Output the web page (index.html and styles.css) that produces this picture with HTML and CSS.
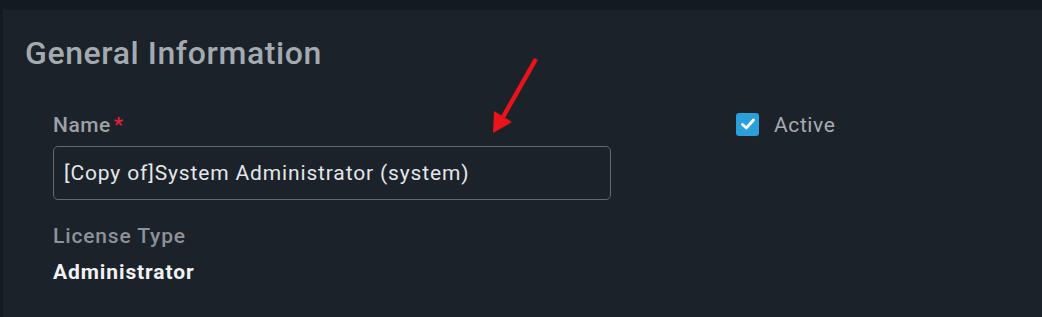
FILE: index.html
```html
<!DOCTYPE html>
<html>
<head>
<meta charset="utf-8">
<link rel="stylesheet" href="styles.css">
</head>
<body>
<div class="topband"></div>
<div class="panel">
  <h2 class="title">General Information</h2>
  <div class="row">
    <div class="col-left">
      <div class="field">
        <label class="label">Name<span class="req">*</span></label>
        <div class="input">[Copy of]System Administrator (system)</div>
      </div>
      <div class="field2">
        <div class="label2">License Type</div>
        <div class="value">Administrator</div>
      </div>
    </div>
    <div class="col-right">
      <div class="check-row">
        <span class="checkbox">
          <svg width="16" height="16" viewBox="0 0 16 16"><path d="M2.5 8.5 L6.3 12 L13.5 4" fill="none" stroke="#fff" stroke-width="2.8" stroke-linecap="round" stroke-linejoin="round"/></svg>
        </span>
        <span class="check-label">Active</span>
      </div>
    </div>
  </div>
  <svg class="arrow" width="60" height="90" viewBox="0 0 60 90">
    <line x1="46" y1="7" x2="13" y2="65" stroke="#e8141a" stroke-width="4.5"/>
    <polygon points="3,81 4,59 22,70" fill="#e8141a"/>
  </svg>
</div>
</body>
</html>
```
FILE: styles.css
```css
html, body {
  margin: 0;
  padding: 0;
  background: #131a21;
  font-family: Roboto, "Liberation Sans", sans-serif;
}
.topband {
  height: 10px;
}
.panel {
  position: relative;
  margin-left: 3px;
  background: #1b222a;
  height: 307px;
  padding: 0 0 0 22px;
  box-sizing: border-box;
}
.title {
  margin: 0;
  padding-top: 23px;
  font-size: 32px;
  font-weight: 500;
  color: #a3abb1;
  line-height: 40px;
  letter-spacing: 0.6px;
}
.row {
  display: flex;
  padding-left: 28px;
  padding-top: 40px;
}
.col-left {
  width: 558px;
}
.col-right {
  padding-left: 125px;
}
.label {
  display: block;
  font-size: 21px;
  font-weight: 500;
  color: #9ba1a6;
  line-height: 24px;
  letter-spacing: 0.5px;
}
.req {
  color: #e3213b;
  margin-left: 3px;
}
.input {
  margin-top: 9px;
  height: 54px;
  box-sizing: border-box;
  border: 1px solid #5b6b76;
  border-radius: 5px;
  padding: 0 10px;
  display: flex;
  align-items: center;
  font-size: 21px;
  color: #e4e6e8;
  letter-spacing: 0.85px;
}
.field2 {
  margin-top: 24px;
}
.label2 {
  font-size: 21px;
  font-weight: 500;
  color: #8c9297;
  line-height: 24px;
  letter-spacing: 0.85px;
}
.value {
  margin-top: 12px;
  font-size: 21px;
  font-weight: 700;
  color: #f1f2f3;
  line-height: 24px;
  letter-spacing: 0.9px;
}
.check-row {
  display: flex;
  align-items: center;
  gap: 15px;
}
.checkbox {
  width: 23px;
  height: 23px;
  border-radius: 3px;
  background: #2a9fd9;
  display: flex;
  align-items: center;
  justify-content: center;
  margin-top: -2px;
}
.check-label {
  font-size: 21px;
  color: #a6acb0;
  line-height: 24px;
  letter-spacing: 0.6px;
}
.arrow {
  position: absolute;
  left: 487px;
  top: 42px;
}
```
